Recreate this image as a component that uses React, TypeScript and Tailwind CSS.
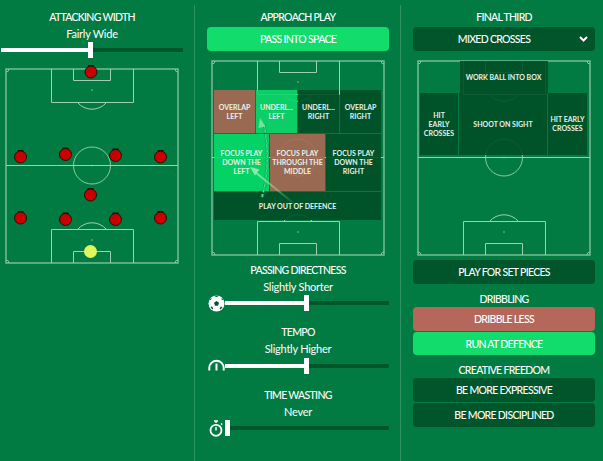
import React from 'react';

const players = [
  { x: 86, y: 4 },
  { x: 15.5, y: 89 },
  { x: 60.5, y: 86.5 },
  { x: 110.5, y: 87.5 },
  { x: 155.5, y: 89 },
  { x: 85.5, y: 127 },
  { x: 15.5, y: 150 },
  { x: 60.5, y: 151.5 },
  { x: 110.5, y: 151.5 },
  { x: 155.5, y: 150 },
];

const PitchLines: React.FC = () => (
  <g fill="none" stroke="#9dcfb5">
    <rect x="1" y="1" width="172" height="194" strokeWidth="1.4" stroke="#80c0a0" />
    <path d="M1 97.5h172" />
    <circle cx="87" cy="97.5" r="18.5" strokeWidth="0.9" />
    <path d="M46.5 1v33.5h82V1M68.5 1v11.5h37V1M72.5 34.5a19 19 0 0 0 29 0" />
    <path d="M46.5 195v-33.5h82V195M68.5 195v-11.5h37V195M72.5 161.5a19 19 0 0 1 29 0" />
    <path d="M1 4a3 3 0 0 0 3-3M173 4a3 3 0 0 1-3-3M1 192a3 3 0 0 1 3 3M173 192a3 3 0 0 0-3 3" strokeWidth="0.8" />
    <circle cx="87" cy="22" r="0.7" fill="#a9d6bf" stroke="none" />
    <circle cx="87" cy="97.5" r="0.7" fill="#a9d6bf" stroke="none" />
    <circle cx="87" cy="172" r="0.7" fill="#a9d6bf" stroke="none" />
  </g>
);

const Pitch: React.FC<{ children?: React.ReactNode }> = ({ children }) => (
  <svg className="absolute inset-0 overflow-visible" width="174" height="196" viewBox="0 0 174 196">
    <PitchLines />
    {children}
  </svg>
);

const Title: React.FC<{ children: React.ReactNode; className?: string }> = ({ children, className }) => (
  <div className={`h-[14px] text-center text-[10.5px] leading-[14px] font-medium tracking-[-0.7px] text-white ${className ?? ''}`}>{children}</div>
);

const Sub: React.FC<{ children: React.ReactNode; className?: string }> = ({ children, className }) => (
  <div className={`h-[14px] text-center text-[11px] leading-[14px] tracking-[-0.25px] text-white ${className ?? ''}`}>{children}</div>
);

const Btn: React.FC<{ children: React.ReactNode; color: string; className?: string }> = ({ children, color, className }) => (
  <div className={`flex h-[24px] items-center justify-center rounded-[4px] pt-[2px] text-[10.5px] font-medium tracking-[-0.7px] text-white ${color} ${className ?? ''}`}>{children}</div>
);

const Zone: React.FC<{ children: React.ReactNode; className: string }> = ({ children, className }) => (
  <div className={`flex items-center justify-center text-center text-[7px] leading-[9px] font-bold whitespace-nowrap text-white ${className}`}>
    <div>{children}</div>
  </div>
);

const SoccerBall = () => (
  <svg width="17" height="17" viewBox="0 0 17 17">
    <circle cx="8.5" cy="8.5" r="8" fill="#fff" />
    <path d="M8.500 6l2.500 1.800-1 2.900H7l-1-2.900z" fill="#00552a" />
    <path d="M6.500 1.200l2 .8 2-.8-.4-.5H6.900zM1.700 5.200L3.400 4.400 3.300 3 1.700 4.600zM15.300 5.200L13.600 4.400 13.700 3 15.300 4.600zM2.500 12l1.600-.4 1.200 2-1 .8zM14.500 12l-1.600-.4-1.200 2 1 .8z" fill="#00552a" />
  </svg>
);

const Gauge = () => (
  <svg className="mb-[2px]" width="17" height="12" viewBox="0 0 17 12" fill="none" stroke="#fff">
    <path d="M1.300 11.500v-2.500a7.200 7.200 0 0 1 14.400 0v2.500" strokeWidth="2" />
    <path d="M8.500 4.500v7" strokeWidth="2" />
  </svg>
);

const Stopwatch = () => (
  <svg width="15" height="17" viewBox="0 0 15 17" fill="none" stroke="#fff">
    <circle cx="7" cy="10.300" r="5.500" strokeWidth="1.800" />
    <path d="M7 3V1M5 1h4M7 7v3.500M12 3.500l1.200 1.200" strokeWidth="1.500" />
  </svg>
);

const Slider: React.FC<{ pct: number; icon?: React.ReactNode; className?: string }> = ({ pct, icon, className }) => (
  <div className={`flex h-[16px] items-center ${className ?? ''}`}>
    {icon && <div className="flex w-[18px] shrink-0 items-center justify-center">{icon}</div>}
    <div className="relative h-[4px] flex-1 bg-[#00552a]">
      <div className="h-full bg-white" style={{ width: `${pct}%` }} />
      <div className="absolute top-[-6px] h-[16px] w-[5px] bg-white" style={{ left: `${pct}%` }} />
    </div>
  </div>
);

const App: React.FC = () => {
  return (
    <div className="flex h-[461px] w-[603px] overflow-hidden bg-[#027b42] pl-px font-['Lato',sans-serif]">
      {/* left column */}
      <div className="mt-[5px] w-[194px] border-r border-[#2f9264] pt-[5px] pr-[11px]">
        <Title>ATTACKING WIDTH</Title>
        <Sub className="mt-[3px]">Fairly Wide</Sub>
        <Slider pct={48} className="mt-px" />
        <div className="relative mt-[10px] ml-[4px] h-[196px] w-[174px]">
          <Pitch>
            {players.map((p) => (
              <g key={`${p.x}-${p.y}`}>
                <path d={`M${p.x - 3} ${p.y - 7}h6v3h-6z`} fill="#1c1210" />
                <circle cx={p.x} cy={p.y} r="6" fill="#c90000" stroke="#1c1210" />
              </g>
            ))}
            <circle cx="85.500" cy="183.500" r="6.500" fill="#dff55c" />
          </Pitch>
        </div>
      </div>

      {/* middle column */}
      <div className="mt-[5px] w-[206px] border-r border-[#2f9264] pt-[5px] pr-[11px] pl-[12px]">
        <Title>APPROACH PLAY</Title>
        <Btn color="bg-[#12dc6c]" className="mt-[3px]">PASS INTO SPACE</Btn>
        <div className="relative mt-[9px] ml-[4px] h-[196px] w-[174px]">
          <Pitch />
          <div className="absolute top-[30px] left-[3px] flex w-[167px] flex-col gap-px opacity-90">
            <div className="flex h-[43px] gap-px">
              <Zone className="w-[41px] bg-[#ab6853]">OVERLAP<br />LEFT</Zone>
              <Zone className="w-[41px] bg-[#0cd96a]">UNDERL...<br />LEFT</Zone>
              <Zone className="w-[41px] bg-[#004f26]">UNDERL...<br />RIGHT</Zone>
              <Zone className="w-[41px] bg-[#004f26]">OVERLAP<br />RIGHT</Zone>
            </div>
            <div className="flex h-[57px] gap-px">
              <Zone className="w-[55px] bg-[#05dc69]">FOCUS PLAY<br />DOWN THE<br />LEFT</Zone>
              <Zone className="w-[55px] bg-[#ab6853]">FOCUS PLAY<br />THROUGH THE<br />MIDDLE</Zone>
              <Zone className="w-[55px] bg-[#004f26]">FOCUS PLAY<br />DOWN THE<br />RIGHT</Zone>
            </div>
            <Zone className="h-[28px] bg-[#004f26]">PLAY OUT OF DEFENCE</Zone>
          </div>
          <svg className="absolute inset-0" width="174" height="196" viewBox="0 0 174 196" fill="none">
            <defs>
              <linearGradient id="runArrow" x1="86" y1="146" x2="40" y2="108" gradientUnits="userSpaceOnUse">
                <stop offset="0" stopColor="#8fe8a8" stopOpacity="0" />
                <stop offset="1" stopColor="#8fe8a8" />
              </linearGradient>
            </defs>
            <path d="M51 137C57 115 58 90 53 64" stroke="#0a9a55" strokeWidth="3" strokeDasharray="3 2" />
            <path d="M51 137C57 115 58 90 53 64" stroke="#5ad694" strokeWidth="1.500" strokeDasharray="3 2" />
            <path d="M49 58l5.500 8.500-7 1.500z" fill="#6fe39a" />
            <path d="M86 146L44 112" stroke="url(#runArrow)" strokeWidth="2" />
            <path d="M39 107l9.500 2.500-4.500 6z" fill="#8fe8a8" />
          </svg>
        </div>
        <Title className="mt-[7px]">PASSING DIRECTNESS</Title>
        <Sub className="mt-[3px]">Slightly Shorter</Sub>
        <Slider pct={48} icon={<SoccerBall />} className="mt-px" />
        <Title className="mt-[14px]">TEMPO</Title>
        <Sub className="mt-[3px]">Slightly Higher</Sub>
        <Slider pct={48} icon={<Gauge />} className="mt-[2px]" />
        <Title className="mt-[14px]">TIME WASTING</Title>
        <Sub className="mt-[3px]">Never</Sub>
        <Slider pct={0} icon={<Stopwatch />} className="mt-px" />
      </div>

      {/* right column */}
      <div className="w-[194px] pt-[10px] pl-[12px]">
        <div className="w-[182px]">
          <Title>FINAL THIRD</Title>
          <div className="relative mt-[3px] flex h-[24px] items-center justify-center rounded-[4px] bg-[#00552a] pt-[2px] pr-[20px] text-[10.5px] font-medium tracking-[-0.7px] text-white">
            MIXED CROSSES
            <svg className="absolute top-[9px] right-[7px]" width="9" height="6" viewBox="0 0 9 6" fill="none" stroke="#fff" strokeWidth="2">
              <path d="M1 1l3.500 3.500L8 1" />
            </svg>
          </div>
          <div className="relative mt-[9px] ml-[4px] h-[196px] w-[174px]">
            <Pitch />
            <div className="absolute top-[1px] left-[3px] flex w-[167px] flex-col opacity-90">
              <div className="flex h-[32px] justify-center">
                <Zone className="w-[88px] bg-[#004f26]">WORK BALL INTO BOX</Zone>
              </div>
              <div className="flex h-[62px] gap-px">
                <Zone className="w-[38px] bg-[#004f26]">HIT<br />EARLY<br />CROSSES</Zone>
                <Zone className="w-[88px] bg-[#004f26]">SHOOT ON SIGHT</Zone>
                <Zone className="w-[39px] bg-[#004f26]">HIT EARLY<br />CROSSES</Zone>
              </div>
            </div>
          </div>
          <Btn color="bg-[#00552a]" className="mt-[4px]">PLAY FOR SET PIECES</Btn>
          <Title className="mt-[8px]">DRIBBLING</Title>
          <Btn color="bg-[#b5685a]" className="mt-px">DRIBBLE LESS</Btn>
          <Btn color="bg-[#12dc6c]" className="mt-px !h-[23px]">RUN AT DEFENCE</Btn>
          <Title className="mt-[8px]">CREATIVE FREEDOM</Title>
          <Btn color="bg-[#00552a]" className="mt-px">BE MORE EXPRESSIVE</Btn>
          <Btn color="bg-[#00552a]" className="mt-px">BE MORE DISCIPLINED</Btn>
        </div>
      </div>
    </div>
  );
};

export default App;
